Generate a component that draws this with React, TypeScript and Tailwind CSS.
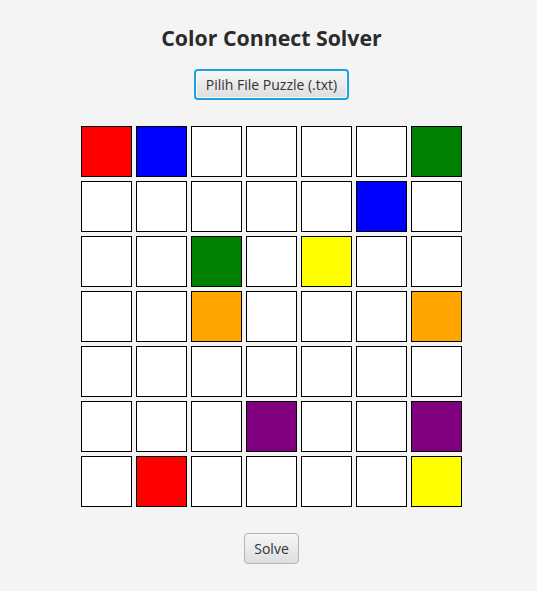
import React from "react";

const W = "bg-white";
const grid: string[][] = [
  ["bg-[#ff0000]", "bg-[#0000ff]", W, W, W, W, "bg-[#008000]"],
  [W, W, W, W, W, "bg-[#0000ff]", W],
  [W, W, "bg-[#008000]", W, "bg-[#ffff00]", W, W],
  [W, W, "bg-[#ffa500]", W, W, W, "bg-[#ffa500]"],
  [W, W, W, W, W, W, W],
  [W, W, W, "bg-[#800080]", W, W, "bg-[#800080]"],
  [W, "bg-[#ff0000]", W, W, W, W, "bg-[#ffff00]"],
];

export default function App() {
  return (
    <div
      className="w-[537px] h-[591px] bg-[#f4f4f4] pl-[6px] flex flex-col items-center text-[#333333]"
      style={{ fontFamily: '"Open Sans", "Noto Sans", sans-serif' }}
    >
      <h1 className="mt-[24px] h-[28px] leading-[28px] text-[21.3px] font-bold text-[#2b2b2b]">
        Color Connect Solver
      </h1>
      <button className="mt-[17px] h-[31px] px-[10px] rounded-[4px] border-2 border-[#1aa3e0] bg-gradient-to-b from-[#f6f6f6] to-[#dedede] text-[14px] leading-none text-[#333333] shadow-[inset_0_0_0_1px_#ffffff]">
        Pilih File Puzzle (.txt)
      </button>
      <div className="mt-[26px] grid grid-cols-[repeat(7,51px)] gap-[4px]">
        {grid.flat().map((c, i) => (
          <div
            key={i}
            className={`w-[51px] h-[51px] border border-black ${c}`}
          />
        ))}
      </div>
      <button className="mt-[26px] h-[31px] px-[9px] rounded-[4px] border border-[#b5b5b5] bg-gradient-to-b from-[#f6f6f6] to-[#dedede] text-[14px] leading-none text-[#333333]">
        Solve
      </button>
    </div>
  );
}
